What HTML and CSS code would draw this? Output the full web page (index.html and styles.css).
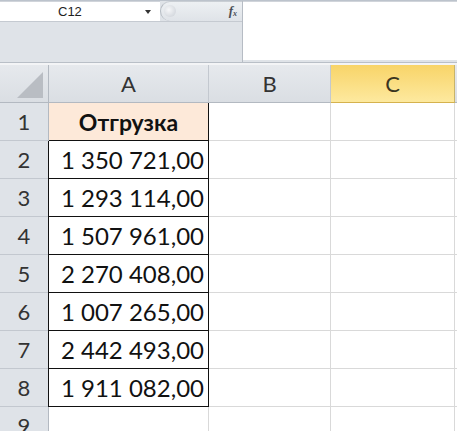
FILE: index.html
```html
<!DOCTYPE html>
<html>
<head>
<meta charset="utf-8">
<link rel="stylesheet" href="styles.css">
</head>
<body>
<div class="app">
  <div class="fbar">
    <div class="fleft">
      <div class="toprow">
        <div class="namebox"><span class="nbtext">C12</span><span class="arrow"></span></div>
        <div class="pill"><span class="knob"></span><span class="fx">f<sub>x</sub></span></div>
      </div>
      <div class="fill"></div>
    </div>
    <div class="formula"></div>
  </div>
  <div class="sep"></div>
  <div class="grid">
    <div class="h corner"><span class="tri"></span></div>
    <div class="h col">A</div>
    <div class="h col">B</div>
    <div class="h col sel">C</div>
    <div class="h col end"></div>

    <div class="rh">1</div><div class="c title">Отгрузка</div><div class="c"></div><div class="c"></div><div class="c end"></div>
    <div class="rh">2</div><div class="c num">1 350 721,00</div><div class="c"></div><div class="c"></div><div class="c end"></div>
    <div class="rh">3</div><div class="c num">1 293 114,00</div><div class="c"></div><div class="c"></div><div class="c end"></div>
    <div class="rh">4</div><div class="c num">1 507 961,00</div><div class="c"></div><div class="c"></div><div class="c end"></div>
    <div class="rh">5</div><div class="c num">2 270 408,00</div><div class="c"></div><div class="c"></div><div class="c end"></div>
    <div class="rh">6</div><div class="c num">1 007 265,00</div><div class="c"></div><div class="c"></div><div class="c end"></div>
    <div class="rh">7</div><div class="c num">2 442 493,00</div><div class="c"></div><div class="c"></div><div class="c end"></div>
    <div class="rh">8</div><div class="c num last">1 911 082,00</div><div class="c"></div><div class="c"></div><div class="c end"></div>
    <div class="rh">9</div><div class="c"></div><div class="c"></div><div class="c"></div><div class="c end"></div>
  </div>
</div>
</body>
</html>
```
FILE: styles.css
```css
* { box-sizing: border-box; }
html, body { margin: 0; padding: 0; background: #fff; overflow: hidden; }
body { font-family: Lato, "Open Sans", sans-serif; }
.app { width: 457px; height: 431px; overflow: hidden; }

.fbar { display: flex; height: 62px; background: #dfe3e8; border-top: 1px solid #bcc3cc; }
.fleft { width: 243px; display: flex; flex-direction: column; border-right: 1px solid #b6bcc4; }
.toprow { display: flex; height: 21px; border-bottom: 1px solid #c5cad1; }
.namebox { width: 160px; background: #fff; position: relative; display: flex; align-items: center; border-top: 1px solid #d0d4da; }
.nbtext { font-family: "Liberation Sans", Arial, sans-serif; font-size: 13px; color: #1e1e1e; margin-left: 58px; }
.arrow { position: absolute; left: 145px; top: 8px; width: 0; height: 0; border-left: 3px solid transparent; border-right: 3px solid transparent; border-top: 4px solid #333; }
.pill { flex: 1; position: relative; background: linear-gradient(#edf0f3, #dfe3e8); border-top-left-radius: 10px; border-bottom-left-radius: 10px; border-left: 1px solid #b5bbc2; border-top: 1px solid #c9ced4; }
.knob { position: absolute; left: 3px; top: 3px; width: 12px; height: 12px; border-radius: 50%; background: radial-gradient(circle at 40% 40%, #f6f7f9, #c9ced5); }
.fx { position: absolute; right: 5px; top: 1px; font-family: "Liberation Serif", serif; font-style: italic; font-weight: bold; font-size: 13px; color: #4a4f56; }
.fx sub { font-size: 8px; vertical-align: -1px; }
.fill { flex: 1; }
.formula { flex: 1; background: #fff; margin-bottom: 2px; border-top: 1px solid #d0d4da; }

.sep { height: 3px; background: #f3f4f6; border-top: 1px solid #b9bfc7; }

.grid { display: grid; grid-template-columns: 49px 160px 122px 124px 2px; grid-auto-rows: 38px; grid-template-rows: 38px; }
.h { background: linear-gradient(#e6e9ed, #dadee3); border-right: 1px solid #c3c8cf; border-bottom: 1px solid #b3b9c1; display: flex; align-items: center; justify-content: center; font-size: 22px; color: #333; font-family: Lato, sans-serif; }
.corner { position: relative; border-right: 1px solid #b3b9c1; }
.tri { position: absolute; right: 5px; bottom: 4px; width: 0; height: 0; border-left: 26px solid transparent; border-bottom: 26px solid #b9bdc3; }
.col.sel { background: linear-gradient(#f8d468, #fde99f); border-right: 1px solid #c8b46a; border-bottom: 1px solid #d5b24e; color: #3b3520; }
.col.end { border-right: none; }

.rh { background: #dfe3e8; border-right: 1px solid #b3b9c1; border-bottom: 1px solid #c3c8cf; display: flex; align-items: center; justify-content: center; font-size: 22px; color: #333; }
.c { border-right: 1px solid #d9d9d9; border-bottom: 1px solid #d9d9d9; font-size: 24px; color: #111; display: flex; align-items: center; }
.c.end { border-right: none; }
.title { background: #fde9d9; justify-content: center; font-weight: bold; border-right: 1px solid #111; border-bottom: 1px solid #111; font-size: 23px; }
.num { justify-content: flex-end; padding-right: 4px; border-right: 1px solid #111; border-bottom: 1px solid #111; border-left: 1px solid #111; margin-left: -1px; }
```
